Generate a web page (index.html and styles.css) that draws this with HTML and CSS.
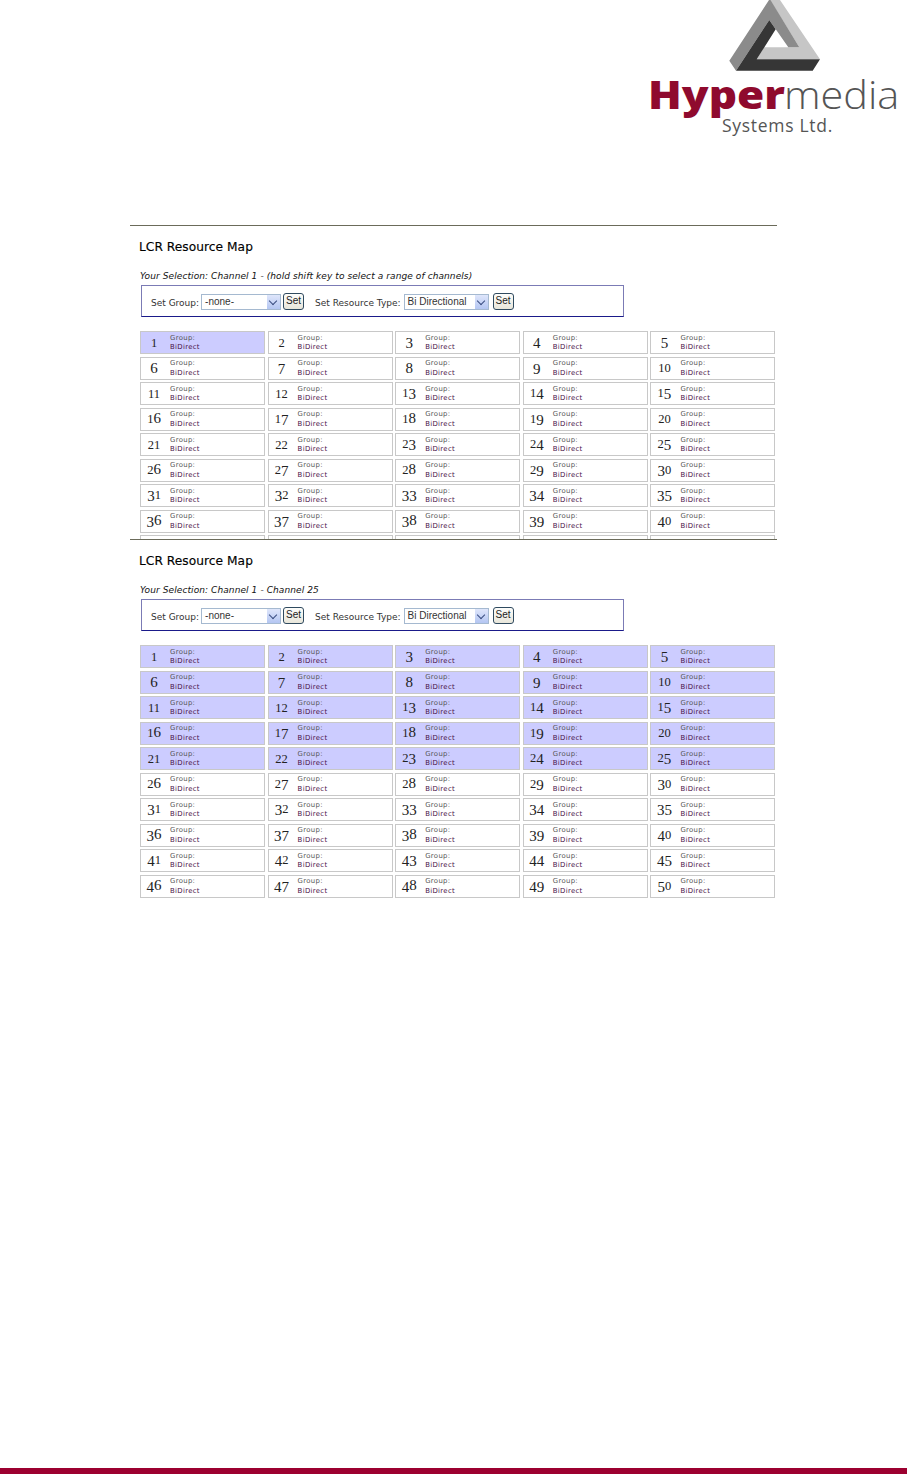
FILE: index.html
```html
<!DOCTYPE html>
<html lang="en">
<head>
<meta charset="utf-8">
<title>LCR Resource Map</title>
<link rel="stylesheet" href="styles.css">
</head>
<body>
<div class="page">
  <header class="logo">
    <svg class="logo-mark" viewBox="0 0 92 72" width="92" height="72" aria-hidden="true">
      <polygon points="41,0 51,0 91,59.3 27.7,59.3 35,47.3 70.3,47.3" fill="#c6c6c6"/>
      <polygon points="40,0 41.5,0 70.3,47.3 59.3,47.3 40.3,20 7,70.7 0.3,60.7" fill="#8b8b8b"/>
      <polygon points="7,70.7 40.3,20 46.7,29.3 27.7,59.3 91,59.3 83.7,70.7" fill="#363636"/>
    </svg>
    <div class="logo-name"><b>Hyper</b><span>media</span></div>
    <div class="logo-sub">Systems Ltd.</div>
  </header>

  <section class="shot shot-first">
    <h1>LCR Resource Map</h1>
    <p class="sel">Your Selection: Channel 1 - (hold shift key to select a range of channels)</p>
    <div class="toolbar">
      <label>Set Group:</label><span class="select s1">-none-<i></i></span><span class="btn">Set</span>
      <label class="l2">Set Resource Type:</label><span class="select s2">Bi Directional<i></i></span><span class="btn b2">Set</span>
    </div>
    <div class="grid" id="g1"></div>
  </section>

  <section class="shot shot-second">
    <h1>LCR Resource Map</h1>
    <p class="sel">Your Selection: Channel 1 - Channel 25</p>
    <div class="toolbar">
      <label>Set Group:</label><span class="select s1">-none-<i></i></span><span class="btn">Set</span>
      <label class="l2">Set Resource Type:</label><span class="select s2">Bi Directional<i></i></span><span class="btn b2">Set</span>
    </div>
    <div class="grid" id="g2"></div>
  </section>
</div>
<footer class="band"></footer>
<script src="app.js"></script>
</body>
</html>
```
FILE: styles.css
```css
* { box-sizing: border-box; }
html, body { margin: 0; padding: 0; background: #fff; }
body { width: 907px; height: 1474px; overflow: hidden; position: relative; font-family: "DejaVu Sans", sans-serif; color: #111; }
.page { height: 1468px; }
.logo { height: 225px; position: relative; }
.logo-mark { position: absolute; left: 729px; top: 0; }
.logo-name { position: absolute; left: 648px; top: 67px; width: 259px; display: flex; font: 300 38px/54px "Open Sans", sans-serif; color: #555; white-space: nowrap; }
.logo-name b { display: block; width: 136px; color: #8f0a2e; font-weight: 800; transform: scaleX(1.16); transform-origin: left center; }
.logo-name span { display: block; transform: scaleX(1.09); transform-origin: left center; }
.logo-sub { position: absolute; left: 722px; top: 114px; font: 400 17.5px/22px "Open Sans", sans-serif; letter-spacing: .7px; color: #555; white-space: nowrap; }
.shot { margin-left: 130px; width: 647px; border-top: 1px solid #6b6b5a; padding: 0 0 0 10px; overflow: hidden; }
.shot-first { height: 314px; }
h1 { margin: 13px 0 0 -1px; font: 400 12.2px/16px "DejaVu Sans", sans-serif; letter-spacing: .05px; -webkit-text-stroke: .15px #000; color: #000; }
.sel { margin: 15px 0 0 0; font: italic 400 9px/12px "DejaVu Sans", sans-serif; letter-spacing: .09px; color: #111; white-space: nowrap; }
.toolbar { margin: 3px 0 0 1px; width: 483px; height: 32px; border: 1px solid #7b7bb5; border-bottom-color: #1a1a8a; display: flex; align-items: center; padding-left: 9px; font: 9px "DejaVu Sans", sans-serif; color: #333; }
.toolbar label { margin-top: 4px; margin-right: 2px; }
.toolbar .l2 { margin-left: 11px; margin-right: 3px; }
.select { position: relative; height: 16px; border: 1px solid #a5b9d0; font: 10px/14px "Liberation Sans", sans-serif; padding-left: 3px; color: #333; margin-top: 2px; }
.select i { position: absolute; right: 0; top: 0; width: 13px; height: 14px; background: linear-gradient(#dfe6fb, #b4c6f2); }
.select i::after { content: ""; position: absolute; left: 3px; top: 3px; width: 5px; height: 5px; border-right: 1.5px solid #3a4d80; border-bottom: 1.5px solid #3a4d80; transform: rotate(45deg); }
.s1 { width: 80px; }
.s2 { width: 85px; }
.btn { width: 21px; height: 17px; margin-left: 2px; margin-top: 1px; border: 1px solid #2f4a5f; border-radius: 3px; background: linear-gradient(#fdfdfb, #e8e6da); font: 10px/14px "Liberation Sans", sans-serif; text-align: center; color: #222; }
.btn.b2 { margin-left: 4px; }
.grid { margin-top: 14px; display: grid; grid-template-columns: repeat(5, 125px); column-gap: 2.6px; grid-auto-rows: 23px; row-gap: 2.55px; }
.cell { border: 1px solid #c8c8c8; display: flex; align-items: center; background: #fff; }
.cell.on { background: #ccccff; }
.num { width: 29px; padding-right: 3px; text-align: center; font: 15px/15px "Liberation Serif", serif; color: #222; }
.num .lo { font-size: 12.5px; }
.num .de { vertical-align: -2px; }
.info { font: 6.9px/9.5px "DejaVu Sans", sans-serif; letter-spacing: .32px; margin-top: 1px; }
.g { display: block; color: #555; }
.t { display: block; color: #4a1248; }
.band { position: absolute; left: 0; right: 0; bottom: 0; height: 6px; background: #9c0030; }
```
FILE: app.js
```js
function digits(n) {
  return String(n).split("").map(function (d) {
    var cls = "012".indexOf(d) >= 0 ? "lo" : "34579".indexOf(d) >= 0 ? "de" : "up";
    return '<span class="' + cls + '">' + d + "</span>";
  }).join("");
}
function fill(id, count, on) {
  var g = document.getElementById(id), html = "";
  for (var i = 1; i <= count; i++) {
    html += '<div class="cell' + (i <= on ? " on" : "") + '"><span class="num">' + digits(i) +
      '</span><span class="info"><span class="g">Group:</span><span class="t">BiDirect</span></span></div>';
  }
  g.innerHTML = html;
}
fill("g1", 45, 1);
fill("g2", 50, 25);
```
